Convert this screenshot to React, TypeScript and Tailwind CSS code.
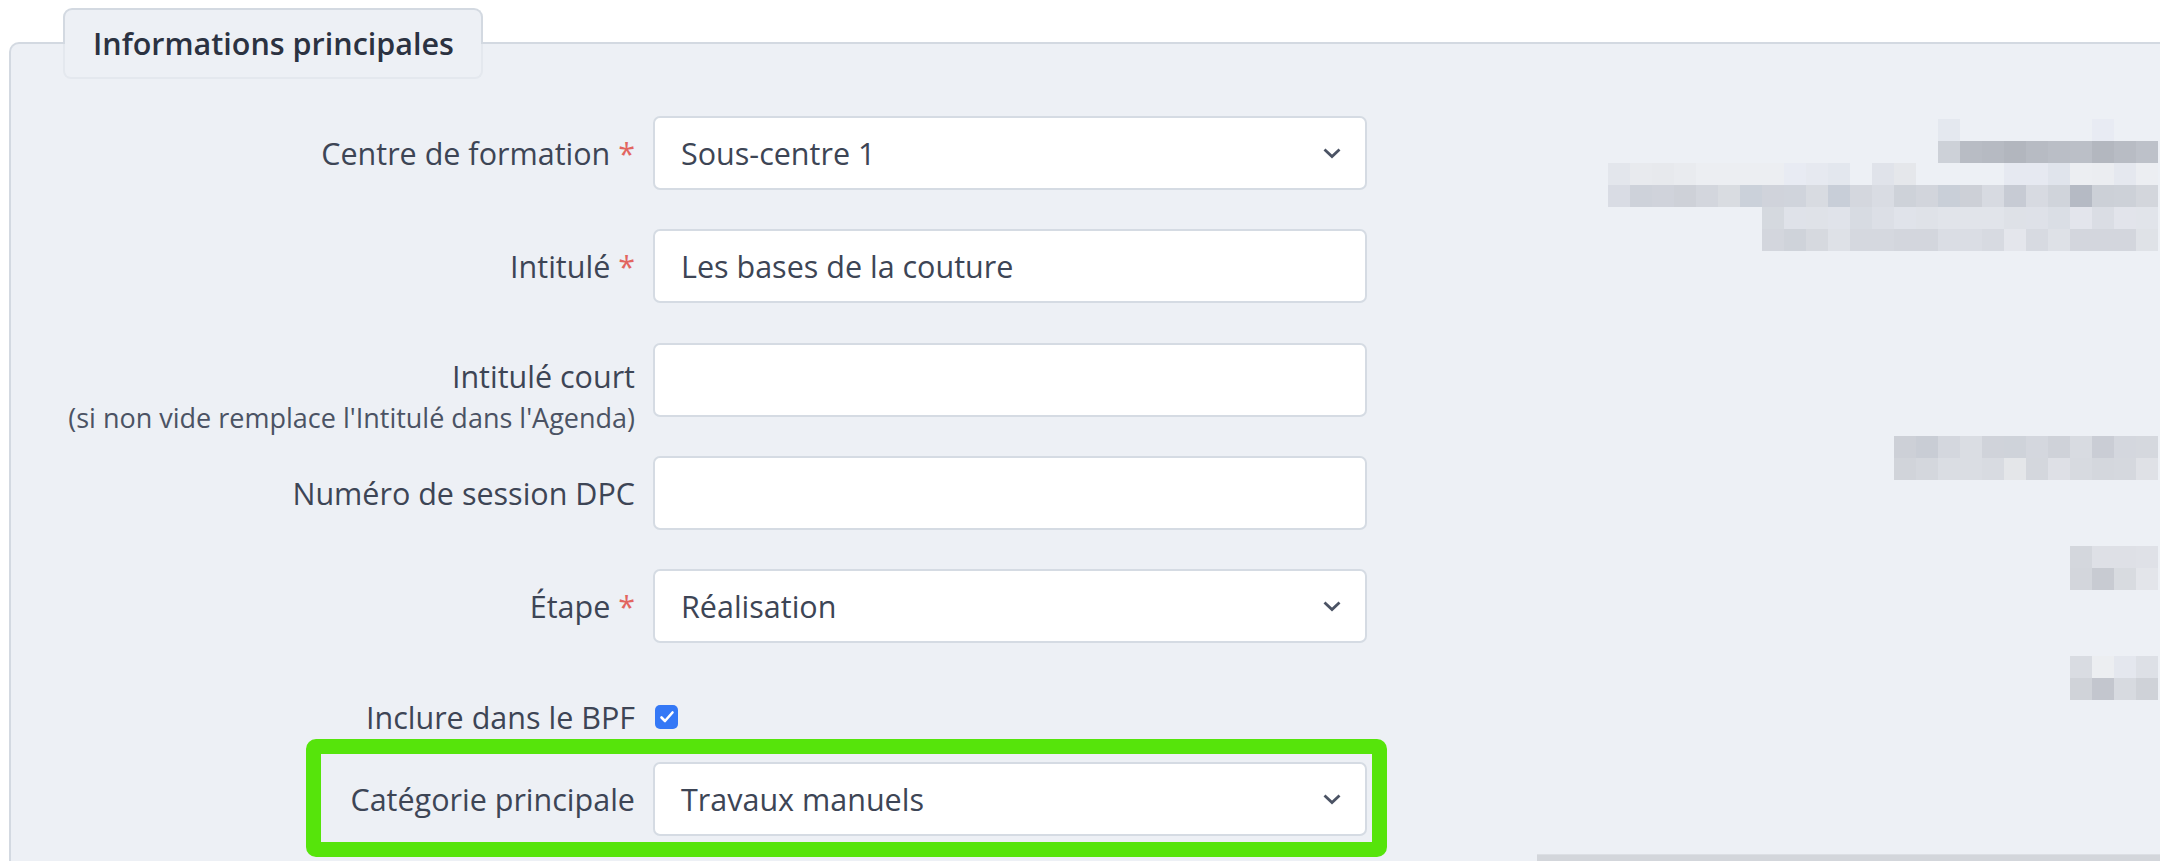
import React from "react";

type MRow = { start: number; colors: (string | null)[]; mt: number };

const mosaic: MRow[] = [
  { mt: 75, start: 15, colors: ["#e4e8ef", null, null, null, null, null, null, "#e8ebf3"] },
  { mt: 0, start: 15, colors: ["#cdd1d8", "#b8bcc4", "#b6bac2", "#b2b6be", "#b7bbc3", "#babec6", "#bbbfc7", "#b3b7bf", "#b8bcc4", "#bdc1c9"] },
  {
    mt: 0,
    start: 0,
    colors: ["#e3e6ec", "#e8eaee", "#e7e9ed", "#e9ebef", "#eceef2", "#eceef2", "#eceef2", "#eceef2", "#e8ebf3", "#e6e9f0", "#e3e7ee", null, "#e0e3ea", "#e5e7eb", null, null, null, null, "#e6e9f1", "#e6e9f1", "#e0e4ec", "#eceef2", "#ebedf1", "#e5e8ef", "#eceef2"],
  },
  {
    mt: 0,
    start: 0,
    colors: ["#d9dce4", "#ced2da", "#d0d3db", "#ced1d8", "#d3d6dd", "#d9dce1", "#cbd1da", "#d0d3db", "#d0d4dc", "#d8dbe1", "#c8ced8", "#d4d7de", "#d9dce3", "#ced2d9", "#d2d5dc", "#c9cfd8", "#cdd0d7", "#d7dae1", "#c7cbd4", "#d7dae1", "#d0d4db", "#b5bac4", "#ccd0d7", "#cdd1d8", "#d3d6dc"],
  },
  {
    mt: 0,
    start: 7,
    colors: ["#d5d9df", "#dfe2e9", "#dfe2e8", "#e0e3ea", "#d7dbe2", "#dcdfe6", "#e0e3ea", "#dfe2e8", "#e1e4ea", "#e1e4ea", "#e1e4ea", "#dee1e7", "#dee1e8", "#dadee5", "#e3e5ec", "#dadde4", "#e2e4eb", "#e1e4ea"],
  },
  {
    mt: 0,
    start: 7,
    colors: ["#d3d6dd", "#cfd3da", "#d6d9df", "#dee1e7", "#d5d8df", "#d5d8df", "#d3d6dd", "#d3d6dd", "#dadde4", "#dadde4", "#d7dae1", "#e4e6ec", "#d7dae1", "#dee1e7", "#d3d6dd", "#d3d6dd", "#d3d6dd", "#dfe2e7"],
  },
  { mt: 185, start: 13, colors: ["#cdd0d7", "#c9cdd5", "#d4d7de", "#dadde3", "#d0d3da", "#cfd3da", "#d4d7de", "#cfd2d9", "#d8dbe1", "#cacdd5", "#d4d7de", "#d5d8de"] },
  { mt: 0, start: 13, colors: ["#d1d4da", "#d4d7dd", "#dadde3", "#dadde3", "#d8dbe1", "#e4e6e9", "#d4d7dd", "#dee0e6", "#d7dae0", "#d4d7dd", "#d5d8de", "#dfe1e6"] },
  { mt: 66, start: 21, colors: ["#d4d7dd", "#dee0e6", "#dee0e6", "#dfe1e7"] },
  { mt: 0, start: 21, colors: ["#d3d6dc", "#c8cbd2", "#d8dbe0", "#e3e5ea"] },
  { mt: 66, start: 21, colors: ["#d9dce2", "#eceef1", "#e4e7ee", "#dde0e6"] },
  { mt: 0, start: 21, colors: ["#d0d3d9", "#c3c6ce", "#d7dae0", "#cfd2d8"] },
];

function Chevron() {
  return (
    <svg width="20" height="12" viewBox="0 0 20 12" className="shrink-0">
      <polyline points="2.5,2.5 10,9.5 17.5,2.5" fill="none" stroke="#4b5364" strokeWidth="2.8" strokeLinejoin="miter" />
    </svg>
  );
}

function Star() {
  return <span className="text-[#e26560]"> *</span>;
}

function Field({ value, select }: { value?: string; select?: boolean }) {
  return (
    <div className="ml-[18px] flex h-[74px] w-[714px] shrink-0 items-center justify-between rounded-[7px] border-2 border-[#d5dbe3] bg-white pl-[26px] pr-[23px] text-[30.5px] text-[#3d4555]">
      <span className="leading-[42px]">{value ?? ""}</span>
      {select ? <Chevron /> : null}
    </div>
  );
}

function Row({ label, star, value, select, mt }: { label: string; star?: boolean; value?: string; select?: boolean; mt: string }) {
  return (
    <div className={`flex h-[74px] items-center ${mt}`}>
      <div className="w-[604px] shrink-0 whitespace-nowrap text-right text-[30.5px] leading-[42px] text-[#3d4555]">
        {label}
        {star ? <Star /> : null}
      </div>
      <Field value={value} select={select} />
    </div>
  );
}

export default function App() {
  return (
    <div className="h-[861px] w-[2160px] overflow-hidden bg-white pl-[9px] pt-[8px] font-['Open_Sans',sans-serif]">
      {/* Tab */}
      <div className="relative z-10 ml-[54px] w-[420px]">
        <div className="h-[36px] rounded-t-[9px] border-x-2 border-t-2 border-[#d3d9e1] bg-[#edf0f5] pl-[28px] pt-[12px]">
          <div className="whitespace-nowrap text-[30.5px] font-semibold leading-[42px] text-[#2b3241]">Informations principales</div>
        </div>
        <div className="h-[35px] rounded-b-[8px] border-x-2 border-b-2 border-[#e4e8ee]" />
      </div>

      {/* Panel */}
      <div className="-mt-[37px] flex h-[830px] rounded-tl-[10px] border-l-2 border-t-2 border-[#d3d9e1] bg-[#edf0f5]">
        {/* Form column */}
        <div className="flex shrink-0 flex-col pl-[20px] pt-[72px]">
          <Row label="Centre de formation" star value="Sous-centre 1" select mt="mt-0" />
          <Row label="Intitulé" star value="Les bases de la couture" mt="mt-[39px]" />

          <div className="mt-[40px] flex h-[74px] items-start">
            <div className="flex w-[604px] shrink-0 flex-col items-end pt-[12px] text-right">
              <div className="whitespace-nowrap text-[30.5px] leading-[42px] text-[#3d4555]">Intitulé court</div>
              <div className="mt-[4px] whitespace-nowrap text-[27px] leading-[34px] text-[#4b5364]">
                (si non vide remplace l'Intitulé dans l'Agenda)
              </div>
            </div>
            <Field />
          </div>

          <Row label="Numéro de session DPC" mt="mt-[39px]" />
          <Row label="Étape" star value="Réalisation" select mt="mt-[39px]" />

          <div className="mt-[62px] flex h-[24px] items-center">
            <div className="w-[604px] shrink-0 whitespace-nowrap text-right text-[30.5px] leading-[42px] text-[#3d4555]">Inclure dans le BPF</div>
            <div className="ml-[20px] flex h-[24px] w-[23px] items-center justify-center rounded-[5px] bg-[#3478f6]">
              <svg width="16" height="14" viewBox="0 0 16 14">
                <polyline points="2.5,7.5 6,11 13.5,2.5" fill="none" stroke="#ffffff" strokeWidth="2.6" strokeLinecap="round" strokeLinejoin="round" />
              </svg>
            </div>
          </div>

          <div className="ml-[275px] mt-[10px] flex h-[118px] w-[1081px] items-start rounded-[10px] border-[15px] border-[#56e40b] pr-[5px] pt-[8px]">
            <div className="flex h-[74px] flex-1 items-center justify-end whitespace-nowrap text-right text-[30.5px] leading-[42px] text-[#3d4555]">
              Catégorie principale
            </div>
            <Field value="Travaux manuels" select />
          </div>
        </div>

        {/* Right blurred column */}
        <div className="ml-[150px] flex flex-1 flex-col">
          {mosaic.map((r, i) => (
            <div key={i} className="flex h-[22px] shrink-0" style={{ marginTop: r.mt, marginLeft: 71 + r.start * 22 }}>
              {r.colors.map((c, j) => (
                <div key={j} className="h-[22px] w-[22px] shrink-0" style={{ backgroundColor: c ?? "transparent" }} />
              ))}
            </div>
          ))}
          <div className="mt-[154px] h-[8px] border-t border-[#dcdfe4] bg-[#d3d6db]" />
        </div>
      </div>
    </div>
  );
}
